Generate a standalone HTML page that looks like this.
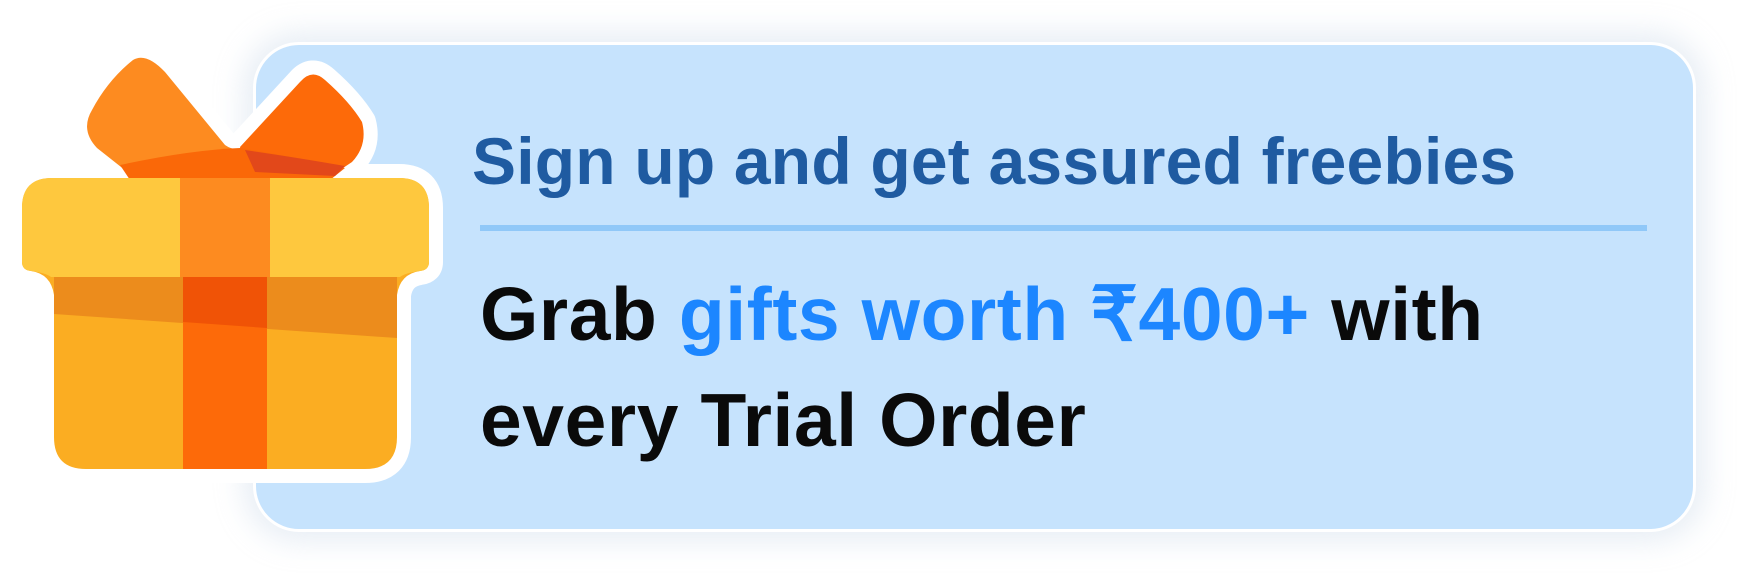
<!DOCTYPE html>
<html><head><meta charset="utf-8"><style>
html,body{margin:0;padding:0;background:#fff;width:1737px;height:573px;overflow:hidden;position:relative;font-family:"Liberation Sans",Arial,sans-serif}
.card{position:absolute;left:253px;top:42px;width:1437px;height:484px;background:#C6E3FD;border:3px solid #fff;border-radius:46px;box-shadow:0 0 28px 10px rgba(190,205,225,.35)}
.h{position:absolute;left:472px;top:123px;font-size:66px;line-height:76px;color:#1F5BA1;font-weight:700;letter-spacing:0.2px;white-space:nowrap}
.line{position:absolute;left:480px;top:225px;width:1167px;height:6px;background:#90C8F8}
.m{position:absolute;left:480px;top:261px;font-size:75px;font-weight:700;line-height:106px;color:#0a0a0a;letter-spacing:0.6px;white-space:nowrap}
.m b{color:#1C86FF}
svg{position:absolute;left:0;top:0}
</style></head><body>
<div class="card"></div>
<svg width="470" height="500" viewBox="0 0 470 500">
 <defs>
  <path id="lb" d="M97 148 Q80 130 92 110 Q108 80 133 60 Q146 52 165 72 L225 145 Q235 152 245 147 L250 178 L135 178Z"/>
  <path id="rb" d="M240 147 L300 82 Q312 68 325 80 Q350 102 362 122 Q368 145 352 162 L325 180 L245 178Z"/>
  <path id="lid" d="M52 178 L399 178 Q429 178 429 208 L429 262 Q429 270 420 271 Q400 274 397 295 L397 437 Q397 469 365 469 L86 469 Q54 469 54 437 L54 295 Q51 274 31 271 Q22 270 22 262 L22 208 Q22 178 52 178Z"/>
 </defs>
 <g stroke="#fff" stroke-width="28" stroke-linejoin="round" fill="#fff">
  <use href="#lb"/><use href="#rb"/><use href="#lid"/>
 </g>
 <use href="#lb" fill="#FD8B20"/>
 <use href="#rb" fill="#FD6A09"/>
 <path d="M120 165 Q190 150 240 148 Q300 158 345 168 L330 180 L130 180Z" fill="#FA6808"/>
 <path d="M245 150 Q300 158 345 166 L335 176 L255 172Z" fill="#E2481A"/>
 <use href="#lid" fill="#FBAD22"/>
 <path d="M22 208 Q22 178 52 178 L399 178 Q429 178 429 208 L429 262 Q429 270 420 271 Q405 273 400 277 L51 277 Q46 273 31 271 Q22 270 22 262Z" fill="#FEC83E"/>
 <path d="M54 277 L397 277 L397 338 L54 314Z" fill="#EC8C1C"/>
 <rect x="180" y="178" width="90" height="99" fill="#FD8B20"/>
 <rect x="183" y="277" width="84" height="192" fill="#FD6A09"/>
 <path d="M183 277 L267 277 L267 328 L183 322Z" fill="#F05306"/>
</svg>
<div class="h">Sign up and get assured freebies</div>
<div class="line"></div>
<div class="m">Grab <b>gifts worth ₹400+</b> with<br>every Trial Order</div>
</body></html>
